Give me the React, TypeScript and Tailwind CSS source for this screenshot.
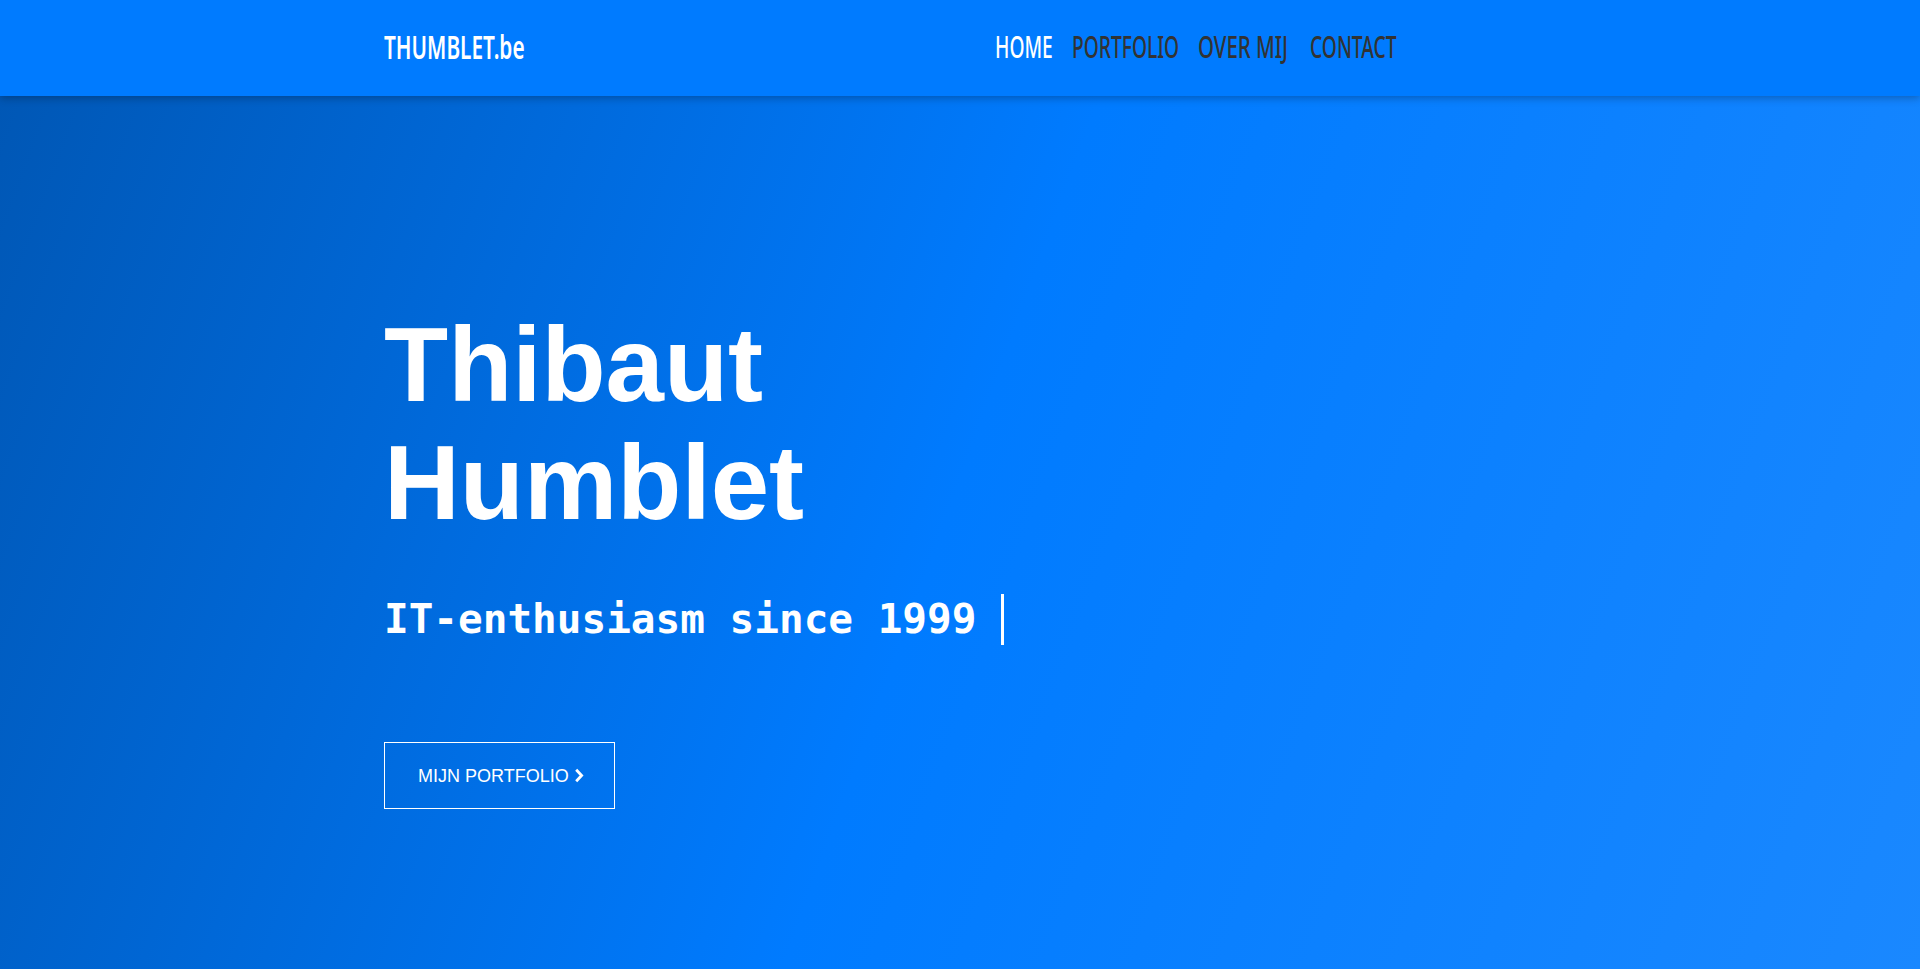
import React from "react";

function NavItem({ label, w, sc, active }: { label: string; w: string; sc: string; active?: boolean }) {
  return (
    <div className={`${w} overflow-visible whitespace-nowrap`}>
      <span className={`inline-block origin-left ${sc} ${active ? "text-white" : "text-[#333]"}`}>
        {label}
      </span>
    </div>
  );
}

export default function App() {
  return (
    <div className="h-[969px] w-full overflow-hidden flex flex-col bg-[linear-gradient(110deg,#0056b3_0%,#007bff_50%,#1a88ff_100%)] font-['Liberation_Sans',Arial,sans-serif]">
      <header className="relative z-10 h-[96px] w-full shrink-0 bg-[#007bff] shadow-[0_2px_8px_rgba(0,0,0,0.28)]">
        <div className="mx-auto flex h-full w-[1152px] items-center justify-between pr-[141px] pb-[4px]">
          <div className="w-[140px] whitespace-nowrap font-['Noto_Sans',sans-serif] text-[33px] font-semibold leading-none text-white">
            <span className="inline-block origin-left scale-x-[0.63]">THUMBLET.be</span>
          </div>
          <nav className="flex items-center font-['Noto_Sans',sans-serif] text-[31px] font-medium leading-none">
            <NavItem label="HOME" w="w-[77px]" sc="scale-x-[0.62]" active />
            <NavItem label="PORTFOLIO" w="w-[126px]" sc="scale-x-[0.62]" />
            <NavItem label="OVER MIJ" w="w-[112px]" sc="scale-x-[0.66]" />
            <NavItem label="CONTACT" w="w-[85px]" sc="scale-x-[0.62]" />
          </nav>
        </div>
      </header>

      <main className="flex-1">
        <div className="mx-auto w-[1152px] pt-[210px]">
          <h1 className="text-[105px] font-bold leading-[118px] text-white">
            Thibaut
            <br />
            Humblet
          </h1>
          <div className="mt-[47px] flex h-[60px] items-center font-['DejaVu_Sans_Mono',monospace] text-[41px] font-bold leading-[60px] text-white">
            <span>IT-enthusiasm since 1999</span>
            <span className="ml-[25px] inline-block h-[51px] w-[3px] bg-white" />
          </div>
          <a className="mt-[93px] flex h-[67px] w-[231px] items-center border border-white pl-[33px] text-[18px] leading-none text-white">
            <span>MIJN PORTFOLIO</span>
            <svg className="ml-[5px]" width="10" height="15" viewBox="0 0 10 15" fill="none">
              <path d="M2.2 1.8 L7.6 7.5 L2.2 13.2" stroke="white" strokeWidth="2.8" strokeLinecap="butt" strokeLinejoin="miter" />
            </svg>
          </a>
        </div>
      </main>
    </div>
  );
}
